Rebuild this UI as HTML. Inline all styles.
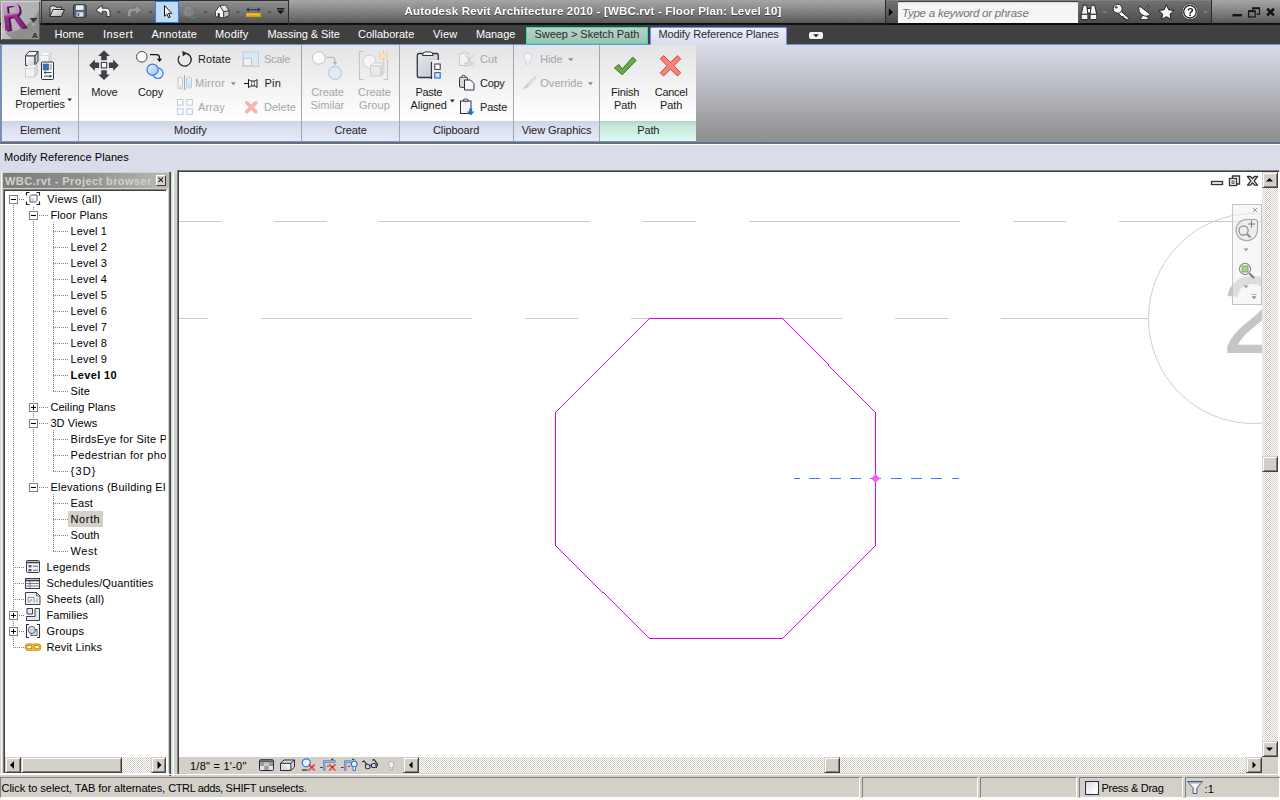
<!DOCTYPE html>
<html lang="en">
<head>
<meta charset="utf-8">
<title>Autodesk Revit Architecture 2010 - [WBC.rvt - Floor Plan: Level 10]</title>
<style>
html,body{margin:0;padding:0;}
body{width:1280px;height:800px;overflow:hidden;position:relative;background:#d4d0c8;font-family:"Liberation Sans",sans-serif;font-size:11px;color:#000;}
div,span,svg{position:absolute;box-sizing:border-box;}
svg{overflow:visible;}
.t{white-space:nowrap;line-height:14px;height:14px;}
.b{font-weight:bold;}
.t .i{position:static;white-space:pre;}
/* title / QAT */
#titlebar{left:0;top:0;width:1280px;height:25px;background:linear-gradient(rgba(0,0,0,0) 0,rgba(0,0,0,0) 23px,#0a0a0a 23px,#141414 25px),repeating-linear-gradient(135deg,rgba(255,255,255,.045) 0,rgba(255,255,255,.045) 1px,rgba(255,255,255,0) 1px,rgba(255,255,255,0) 3px),linear-gradient(#a4a4a4 0,#8e8e8e 30%,#707070 65%,#565656 92%);}
#menubar{left:0;top:25px;width:1280px;height:19px;background:#404040;}
#appbtn{left:1px;top:1px;width:39px;height:39px;background:linear-gradient(135deg,#a8a8a8 0,#9a9a9a 40%,#8c8c8c 70%,#929292 100%);border:1px solid #d6d6d6;border-right-color:#5a5a5a;border-bottom-color:#5a5a5a;}
#qat{left:41px;top:0;width:248px;height:25px;background:linear-gradient(#2c2c2c 0,#2c2c2c 1px,#9a9a9a 1px,#8a8a8a 2.5px,#7a7a7a 40%,#565656 22.5px,#0c0c0c 23px);border-right:1px solid #2c2c2c;border-left:1px solid #333;}
#qsel{left:155px;top:1px;width:24px;height:22px;background:#c3daf5;border:1px solid #2f7fe0;}
#info{left:885px;top:0;width:327px;height:25px;background:linear-gradient(#8a8a8a 0,#707070 1.5px,#5e5e5e 50%,#4c4c4c 22.5px,#0c0c0c 23px);border-left:1px solid #2a2a2a;border-right:1px solid #2a2a2a;}
#search{left:898px;top:1px;width:180px;height:22px;background:linear-gradient(#dcdcdc 0,#f4f4f4 2px,#f6f6f6 100%);border-top:1px solid #3a3a3a;}
.menu{color:#fff;top:27px;}
#tab1{left:526px;top:27px;width:122px;height:17px;background:linear-gradient(#b5d3c8 0,#9cc4b4 100%);border:1px solid #31e3a0;}
#tab2{left:650px;top:27px;width:137px;height:18px;background:linear-gradient(#eceffa 0,#dfe3f2 60%,#d9dce7 100%);border:1px solid #6f93e3;border-bottom:none;border-radius:2px 2px 0 0;z-index:2;}
#minbtn{left:809px;top:32px;width:14px;height:7px;background:#f2f2f2;border-radius:2px;}
#rlogo{left:2px;top:2px;width:37px;height:37px;overflow:hidden;}
#rlogo span{left:-5px;top:-13px;width:32px;height:50px;font-weight:bold;font-size:45px;line-height:50px;text-align:center;transform-origin:50% 60%;transform:perspective(40px) rotateX(22deg) rotateZ(-10deg) scaleX(.66);}
#rlogo .r1{color:transparent;background:linear-gradient(#dab8da 0,#c08cc0 47%,#9c2e92 53%,#761672 100%);-webkit-background-clip:text;background-clip:text;}
#rlogo .r2{color:#4e0e4c;left:-3.200px;top:-12.200px;}
/* ribbon */
#ribbon{left:0;top:44px;width:1280px;height:98px;background:linear-gradient(#d9dce7 0,#c6c9d3 25%,#a9aaae 65%,#8e8e8e 100%);border-top:1px solid #6f93e3;border-bottom:1px solid #6f93e3;border-left:2px solid #7d8fb8;}
#panels{left:2px;top:45px;width:694px;height:76px;background:linear-gradient(#e4e4e6 0,#efeff0 40%,#ffffff 100%);}
#plabels{left:2px;top:121px;width:694px;height:20px;background:linear-gradient(#ccd2e4 0,#d9deee 30%,#e8ebf7 100%);}
#plpath{left:600px;top:121px;width:96px;height:20px;background:linear-gradient(#b4d4c8 0,#c9e9dd 30%,#dffaf0 100%);}
.psep{top:45px;width:1px;height:96px;background:#a6a6a6;}
.pl{top:123px;color:#1e1e1e;}
.rt{color:#1a1a1a;}
.dis{color:#a6a6a6;}
#under1{left:0;top:142px;width:1280px;height:2px;background:#6e6e6e;}
#under2{left:0;top:144px;width:1280px;height:1px;background:#fff;}
#optbar{left:0;top:145px;width:1280px;height:27px;background:#dadde8;}
/* browser */
#pbtitle{left:3px;top:173px;width:166px;height:15px;background:linear-gradient(90deg,#7d7d7d 0,#8f8f8f 50%,#b9b9b9 100%);}
#pbclose{left:156px;top:175px;width:10px;height:11px;background:#d4d0c8;border:1px solid #fff;border-right-color:#404040;border-bottom-color:#404040;}
#tree{left:3px;top:189px;width:165px;height:584px;background:#fff;border:1px solid #404040;border-top-color:#808080;border-left-color:#808080;border-right:2px solid #fff;border-bottom:none;box-shadow:inset 1px 1px 0 #404040;}
#treeclip{left:5px;top:191px;width:161px;height:566px;overflow:hidden;}
.tr{color:#000;}
.vd{width:1px;background:repeating-linear-gradient(#808080 0,#808080 1px,transparent 1px,transparent 2px);}
.hd{height:1px;background:repeating-linear-gradient(90deg,#808080 0,#808080 1px,transparent 1px,transparent 2px);}
.xb{width:9px;height:9px;border:1px solid #808080;background:#fff;}
.xb i{position:absolute;left:1px;top:3px;width:5px;height:1px;background:#000;}
.xb b{position:absolute;left:3px;top:1px;width:1px;height:5px;background:#000;}
/* classic scrollbars */
.sbtn{background:#d4d0c8;border:1px solid #d4d0c8;border-right-color:#404040;border-bottom-color:#404040;box-shadow:inset 1px 1px 0 #fff,inset -1px -1px 0 #808080;}
.strack{background:#eae8e3;background-image:repeating-conic-gradient(#fff 0 25%,#d4d0c8 0 50%);background-size:2px 2px;}
/* canvas */
#canvas{left:179px;top:172px;width:1083px;height:585px;background:#fff;overflow:hidden;}
#cborderT{left:177px;top:170px;width:1102px;height:2px;background:#404040;border-top:1px solid #808080;}
#cborderL{left:177px;top:170px;width:2px;height:604px;background:#404040;border-left:1px solid #808080;}
#vcbar{left:179px;top:757px;width:224px;height:16px;background:#d4d0c8;}
/* status */
#status{left:0;top:776px;width:1280px;height:24px;background:#d4d0c8;}
.spane{top:777px;height:21px;border:1px solid #808080;border-right-color:#fff;border-bottom-color:#fff;}
</style>
</head>
<body>
<div id="titlebar"></div>
<div id="menubar"></div>
<div id="qat"></div>
<div id="qsel"></div>
<div id="appbtn"></div>
<!-- application button logo -->
<svg style="left:0;top:0" width="41" height="41" viewBox="0 0 41 41">
  <defs>
    <linearGradient id="rg" x1="0" y1="0" x2="0" y2="1"><stop offset="0" stop-color="#d6b4d6"/><stop offset=".42" stop-color="#bb88bb"/><stop offset=".5" stop-color="#9c2e92"/><stop offset="1" stop-color="#7a1674"/></linearGradient>
    <linearGradient id="rg2" x1="0" y1="0" x2="0" y2="1"><stop offset="0" stop-color="#9a5a98"/><stop offset=".5" stop-color="#601660"/><stop offset="1" stop-color="#420a40"/></linearGradient>
    <clipPath id="abc"><rect x="2" y="2" width="37" height="37"/></clipPath>
  </defs>
  <g clip-path="url(#abc)">
    <circle cx="2" cy="-8" r="41" fill="#c9c9c9" fill-opacity=".55"/>
    <path d="M2 39V26Q4 33 12 39z" fill="#d8d8d8" fill-opacity=".6"/>
  </g>
  <path d="M29.700 18h7.700l-3.850 4.600z" fill="#2e3238"/>
  <path d="M30.500 23.300h6.100l-3.050 3.200z" fill="#fff" fill-opacity=".25"/>
  <text x="32" y="38.200" font-family="Liberation Sans, sans-serif" font-weight="bold" font-size="8" fill="#2a2a2a">A</text>
</svg>
<div id="rlogo"><span class="r2">R</span><span class="r1">R</span></div>
<!-- quick access toolbar icons -->
<svg style="left:0;top:0" width="290" height="24" viewBox="0 0 290 24">
  <defs><linearGradient id="fold" x1="0" y1="0" x2="1" y2="1"><stop offset="0" stop-color="#f4f4f4"/><stop offset="1" stop-color="#a9a9ad"/></linearGradient></defs>
  <!-- open -->
  <path d="M50 16.500V7.200l1-1.400h4l1 1.400h5.500v2.300" fill="#d6d6d8" stroke="#2b2b2b" stroke-width="1"/>
  <path d="M50 16.500l3-7h11.500l-3.200 7z" fill="url(#fold)" stroke="#2b2b2b" stroke-width="1" stroke-linejoin="round"/>
  <!-- save -->
  <rect x="73.5" y="4.8" width="12.6" height="12.4" rx="1.4" fill="#5b667c" stroke="#262c3a" stroke-width="1"/>
  <rect x="76" y="5.3" width="7.6" height="4.6" fill="#eef0f4"/>
  <rect x="76.5" y="12.2" width="6.8" height="4.5" fill="#dfe3ea"/><rect x="77.6" y="13.2" width="1.6" height="2.6" fill="#3a465e"/>
  <!-- undo -->
  <path d="M95.800 10.200l6.400-5v3h3.300q4.500 0 4.500 4.600v3.800h-3.200v-3.200q0-2.200-2.200-2.200h-2.400v3z" fill="#f4f4f4" stroke="#2a2a2a" stroke-width=".900" stroke-linejoin="round"/>
  <path d="M116.3 11.3h5l-2.5 2.6z" fill="#505050"/>
  <!-- redo (dim) -->
  <path d="M141.800 10.200l-6.400-5v3h-3.300q-4.500 0-4.500 4.600v3.800h3.200v-3.200q0-2.200 2.200-2.200h2.400v3z" fill="#9c9c9c" stroke="#727272" stroke-width=".900" stroke-linejoin="round"/>
  <path d="M148.2 11.3h5l-2.5 2.6z" fill="#505050"/>
  <!-- pointer -->
  <path d="M164.5 5.6v10.6l2.4-2.3 1.7 3.8 1.6-.7-1.7-3.7h3.2z" fill="#fff" stroke="#111" stroke-width="1" stroke-linejoin="round"/>
  <!-- sync 3d (dim) -->
  <path d="M183 8l5.5-3 5.5 3v6.4l-5.5 3-5.5-3z" fill="#8a8a8a" stroke="#6e6e6e" stroke-width=".8"/>
  <path d="M183 8l5.5 3 5.5-3M188.500 11v6.400" fill="none" stroke="#777" stroke-width=".8"/>
  <path d="M190.500 13.300a3.300 3.300 0 0 1 5.800-1.200M196.800 15.600a3.300 3.300 0 0 1-5.800 1.200" fill="none" stroke="#4a9a52" stroke-width="1.200"/>
  <path d="M203.200 11.300h5l-2.500 2.600z" fill="#505050"/>
  <!-- house -->
  <path d="M219.800 5.600l5.800-.6 3.400 5.800-5.400 1z" fill="#e4e4e4" stroke="#2b2b2b" stroke-width=".800" stroke-linejoin="round"/>
  <path d="M223.600 11.800l5.400-1v4.800l-5.400 2.300z" fill="#c4c4c6" stroke="#2b2b2b" stroke-width=".800" stroke-linejoin="round"/>
  <path d="M215.500 11.500l4.300-5.900 3.800 6.200v6.100l-8.100-1.300z" fill="#f8f8f8" stroke="#2b2b2b" stroke-width=".800" stroke-linejoin="round"/>
  <path d="M217.700 17v-4l2 .3v4z" fill="#222"/>
<path d="M235.400 11.300h5l-2.500 2.600z" fill="#505050"/>
  <!-- measure -->
  <path d="M246 9.600l3-2.400v1.800h8.800V7.200l3 2.400-3 2.400v-1.800H249v1.800z" fill="#2e3a4e"/>
  <rect x="246" y="13.200" width="15" height="3.600" fill="#f2a900"/>
  <path d="M248 13.200v1.600M250 13.200v1.600M252 13.200v1.600M254 13.200v1.600M256 13.200v1.600M258 13.200v1.600" stroke="#fbe08a" stroke-width=".8"/>
  <path d="M267.200 11.300h5l-2.500 2.600z" fill="#505050"/>
  <!-- customize -->
  <rect x="277" y="8.200" width="7.400" height="1.300" fill="#0c0c0c"/>
  <path d="M277 10.400h7.400l-3.700 3.600z" fill="#0c0c0c"/>
</svg>
<!-- title -->
<span class="t b" style="left:404.5px;top:4px;font-size:11.5px;color:#fff;text-shadow:0 1px 1px rgba(0,0,0,.55);letter-spacing:0.177px">Autodesk Revit Architecture 2010 - [WBC.rvt - Floor Plan: Level 10]</span>
<!-- info center -->
<div id="info"></div>
<div id="search"></div>
<span class="t" style="left:902px;top:6px;font-size:11.5px;font-style:italic;color:#747474;letter-spacing:-0.231px">Type a keyword or phrase</span>
<svg style="left:880px;top:0" width="400" height="24" viewBox="880 0 400 24">
  <path d="M888.800 8.300l4.200 3.900-4.200 3.900z" fill="#050505"/>
  <!-- binoculars -->
  <g stroke="#1a1a1a" stroke-width=".900" stroke-linejoin="round" fill="#f6f6f6">
    <rect x="1087" y="8.500" width="4" height="4.500"/>
    <path d="M1083.300 5.300h3.400l1.200 9h-6.600z"/>
    <path d="M1091.300 5.300h3.400l2 9h-6.600z"/>
    <rect x="1081.200" y="14.300" width="6.700" height="5.300" rx=".800"/>
    <rect x="1090.100" y="14.300" width="6.700" height="5.300" rx=".800"/>
  </g>
  <path d="M1102.400 11.200h4.800l-2.400 2.700z" fill="#7c7c7c"/>
  <!-- key -->
  <path d="M1120.500 10.800l8.300 7.400-.6 1.400-2.600.2-.4-1.600-1.700.1-.3-1.700-1.700-.1-3.600-3.400z" fill="#f4f4f4" stroke="#1a1a1a" stroke-width=".900" stroke-linejoin="round"/>
  <circle cx="1117.700" cy="8.700" r="4.500" fill="#f4f4f4" stroke="#1a1a1a" stroke-width=".900"/>
  <circle cx="1116.200" cy="7.200" r="1.300" fill="#4a4a4a"/>
  <!-- satellite dish -->
  <path d="M1140 19.600l3.200-5h2.600l3.200 5z" fill="#f4f4f4" stroke="#1a1a1a" stroke-width=".800" stroke-linejoin="round"/>
  <path d="M1139.400 5.800l11 8.600q-3.800 3.400-8.400.400t-2.600-9z" fill="#f6f6f6" stroke="#1a1a1a" stroke-width=".900" stroke-linejoin="round"/>
  <path d="M1144.600 10.300l4.600-4.800" stroke="#1a1a1a" stroke-width="2"/>
  <path d="M1144.600 10.300l4.600-4.800" stroke="#eaeaea" stroke-width=".800"/>
  <!-- star -->
  <path d="M1166.400 4.800l2.300 5 5.400.6-4 3.700 1.100 5.300-4.800-2.700-4.800 2.700 1.100-5.300-4-3.700 5.400-.6z" fill="#f6f6f6" stroke="#1a1a1a" stroke-width="1" stroke-linejoin="round"/>
  <!-- help -->
  <circle cx="1190" cy="11.700" r="8" fill="#f6f6f6" stroke="#2a2a2a" stroke-width=".800"/>
  <circle cx="1190" cy="11.700" r="6.300" fill="#fff" stroke="#1a1a1a" stroke-width="1.300"/>
  <text x="1186.900" y="15.700" font-family="Liberation Sans, sans-serif" font-weight="bold" font-size="11" fill="#1a1a1a">?</text>
  <path d="M1203.200 11.200h4.800l-2.400 2.700z" fill="#7c7c7c"/>
  <!-- window buttons -->
  <rect x="1232.500" y="14" width="9.500" height="2.400" fill="#141414"/>
  <path d="M1252.700 10v-2h6.800v6.200h-3" fill="none" stroke="#141414" stroke-width="1.200"/>
  <path d="M1252.700 8.300h6.800" stroke="#141414" stroke-width="1.800"/>
  <rect x="1248.600" y="11" width="6.600" height="6" fill="none" stroke="#141414" stroke-width="1.200"/>
  <path d="M1248.600 11.300h6.600" stroke="#141414" stroke-width="1.800"/>
  <path d="M1267.200 8.800l6.800 6.600M1274 8.800l-6.800 6.600" stroke="#141414" stroke-width="2.700"/>
</svg>
<!-- menu -->
<span class="t menu" style="left:54.500px;letter-spacing:-0.015px">Home</span>
<span class="t menu" style="left:103px;letter-spacing:0.457px">Insert</span>
<span class="t menu" style="left:151.500px;letter-spacing:0.179px">Annotate</span>
<span class="t menu" style="left:215px;letter-spacing:0.179px">Modify</span>
<span class="t menu" style="left:267.500px;letter-spacing:-0.083px">Massing &amp; Site</span>
<span class="t menu" style="left:358px;letter-spacing:0.003px">Collaborate</span>
<span class="t menu" style="left:433px;letter-spacing:0.215px">View</span>
<span class="t menu" style="left:476px;letter-spacing:-0.093px">Manage</span>
<div id="tab1"></div>
<div id="tab2"></div>
<span class="t" style="left:534.500px;top:27px;color:#2a2a2a;letter-spacing:-0.038px">Sweep &gt; Sketch Path</span>
<span class="t" style="left:658.500px;top:27px;color:#2a2a2a;z-index:3;letter-spacing:-0.118px">Modify Reference Planes</span>
<div id="minbtn"></div>
<svg style="left:809px;top:32px" width="14" height="7" viewBox="0 0 14 7"><path d="M4.200 2.200h5.600l-2.800 3z" fill="#222"/></svg>
<div id="ribbon"></div>
<div id="panels"></div>
<div id="plabels"></div>
<div id="plpath"></div>
<div class="psep" style="left:78px"></div>
<div class="psep" style="left:301px"></div>
<div class="psep" style="left:399px"></div>
<div class="psep" style="left:513px"></div>
<div class="psep" style="left:599px"></div>
<div id="under1"></div>
<div id="under2"></div>
<div id="optbar"></div>
<svg style="left:0;top:44px" width="700" height="98" viewBox="0 44 700 98">
  <defs>
    <linearGradient id="cube" x1="0" y1="0" x2="1" y2="1"><stop offset="0" stop-color="#fdfdfd"/><stop offset="1" stop-color="#cfd2d8"/></linearGradient>
    <linearGradient id="bl" x1="0" y1="0" x2="1" y2="1"><stop offset="0" stop-color="#e3eefa"/><stop offset="1" stop-color="#9cc3ea"/></linearGradient>
    <linearGradient id="clipg" x1="0" y1="0" x2="1" y2="1"><stop offset="0" stop-color="#e6e7ec"/><stop offset="1" stop-color="#c3c5cf"/></linearGradient>
  </defs>
  <!-- Element Properties -->
  <g stroke-linejoin="round">
    <path d="M25.500 56l3.500-4.500h9l-3 4.500z" fill="#f7f7f8" stroke="#3a4150" stroke-width="1"/>
    <path d="M25.500 56h9.500v9.500h-9.500z" fill="url(#cube)" stroke="#3a4150" stroke-width="1"/>
    <path d="M35 56l3-4.500v9.500l-3 4.500z" fill="#c3c7cf" stroke="#3a4150" stroke-width="1"/>
    <path d="M40 55.500l2.500-3.500h8l-2 3.500z" fill="#fafafa" stroke="#d4d6da" stroke-width=".8"/>
    <path d="M40 55.500h9v9h-9z" fill="#f6f6f7" stroke="#d0d2d6" stroke-width=".8"/>
    <path d="M49 55.500l2-3.500v9l-2 3.500z" fill="#e2e4e8" stroke="#d0d2d6" stroke-width=".8"/>
    <path d="M25.500 68h9.500v9h-9.500z" fill="#f3f3f5" stroke="#c6c8cd" stroke-width=".9"/>
    <path d="M25.500 68l3-3h9l-2.500 3z" fill="#fafafa" stroke="#d0d2d6" stroke-width=".8"/>
    <path d="M35 68l2.500-3v9l-2.500 3z" fill="#dcdee3" stroke="#c6c8cd" stroke-width=".8"/>
    <rect x="41.500" y="62" width="12" height="17.500" rx="1" fill="#fbfbfc" stroke="#2c3443" stroke-width="1"/>
    <rect x="43.200" y="64" width="5.400" height="6" fill="#3f6fb3" stroke="#27497e" stroke-width=".6"/>
    <rect x="49.600" y="64" width="2.200" height="6" fill="#b9bdc6"/>
    <path d="M44 72.500h7.500M44 76.200h7.500" stroke="#2c3443" stroke-width=".9"/>
    <path d="M45.800 71.200l-1.800 1.300 1.800 1.300M49.500 74.900l2 1.300-2 1.300" fill="none" stroke="#2c3443" stroke-width=".8"/>
  </g>
  <path d="M67.400 98.400h4.600l-2.300 2.800z" fill="#222"/>
  <!-- Move -->
  <g fill="#3c4049">
    <path d="M104 50.300l5.800 5.700h-3v4.200h-5.600v-4.200h-3z"/>
    <path d="M104 80.100l5.800-5.700h-3v-4.200h-5.600v4.200h-3z"/>
    <path d="M89.200 65.200l5.700-5.800v3h4.200v5.600h-4.200v3z"/>
    <path d="M118.800 65.200l-5.700-5.800v3h-4.200v5.600h4.200v3z"/>
    <rect x="101.300" y="62.500" width="5.400" height="5.400" fill="#fff" stroke="#3c4049" stroke-width="1.100"/>
  </g>
  <!-- Copy -->
  <circle cx="141.800" cy="56.800" r="5.300" fill="#fcfcfc" stroke="#4a4a4a" stroke-width="1"/>
  <path d="M150 54.600h6.500q3 0 3 3v2" fill="none" stroke="#111" stroke-width="1.300"/>
  <path d="M156.900 58.700h5.200l-2.600 3.200z" fill="#111"/>
  <circle cx="157.900" cy="73.300" r="5.200" fill="#dcebf8" stroke="#2f7fd4" stroke-width="1.200"/>
  <circle cx="152.600" cy="69.700" r="5.600" fill="url(#bl)" stroke="#2f7fd4" stroke-width="1.200"/>
  <!-- Rotate -->
  <path d="M185.700 53.200a6.500 6.500 0 1 1-6.300 2.600" fill="none" stroke="#2b2b2b" stroke-width="1.400"/>
  <path d="M182.300 50.800l4.700 2.400-4.200 3.200z" fill="#2b2b2b"/>
  <!-- Scale (dim) -->
  <rect x="243" y="51.800" width="15.500" height="14.500" fill="#dbe7f1" stroke="#b9cfe2" stroke-width="1"/>
  <rect x="243.500" y="58.300" width="8" height="7.500" fill="#eef2f5" stroke="#c4c4c4" stroke-width="1"/>
  <!-- Mirror (dim) -->
  <path d="M184.500 75v15" stroke="#a9a9a9" stroke-width="1"/>
  <path d="M182.500 90v-12q-2-2-4.500 0v10.500h2.500v-3" fill="#f4f4f4" stroke="#c2c2c2" stroke-width="1"/>
  <path d="M186.500 89.500v-11.500q2.500-2.500 5 0v10h-2.500v-3" fill="#dde9f5" stroke="#b5cde6" stroke-width="1"/>
  <path d="M230.800 82.300h5l-2.500 3z" fill="#8a8a8a"/>
  <!-- Pin -->
  <path d="M244 83.500h4.500" stroke="#1e1e1e" stroke-width="1.100"/>
  <path d="M248.500 79.300q1.600 1.700 3.200 1.700h2.600q1.500 0 2.700-1.500v8q-1.200-1.500-2.700-1.500h-2.600q-1.600 0-3.200 1.700z" fill="#fff" stroke="#1e1e1e" stroke-width="1" stroke-linejoin="round"/>
  <path d="M251.700 81v5M254.300 81v5" stroke="#1e1e1e" stroke-width=".700"/>
  <!-- Array (dim) -->
  <g fill="#fafbfc" stroke-width="1">
    <rect x="177.500" y="99.500" width="5.600" height="5.600" stroke="#c8c8c8"/>
    <rect x="186.800" y="99.500" width="5.600" height="5.600" stroke="#b4cfe8"/>
    <rect x="177.500" y="108.800" width="5.600" height="5.600" stroke="#b4cfe8"/>
    <rect x="186.800" y="108.800" width="5.600" height="5.600" stroke="#b4cfe8"/>
  </g>
  <!-- Delete (dim) -->
  <path d="M246.800 102.800l9 9M255.800 102.800l-9 9" stroke="#f3b4b0" stroke-width="3.600" stroke-linecap="round"/>
  <!-- Create Similar (dim) -->
  <circle cx="318.800" cy="57.900" r="6.300" fill="#fafafa" stroke="#c2c2c2" stroke-width="1"/>
  <path d="M326.500 57.200h5.500q3 0 3 3v3" fill="none" stroke="#b0b0b0" stroke-width="1.100"/>
  <path d="M332.600 62.200h4.800l-2.400 3z" fill="#b0b0b0"/>
  <circle cx="335" cy="73" r="6.600" fill="#dfeaf4" stroke="#b5cfe8" stroke-width="1.100"/>
  <!-- Create Group (dim) -->
  <path d="M363.500 51.500h-4v28h4M383.500 79.500h4v-20" fill="none" stroke="#c6c6c6" stroke-width="1.100"/>
  <circle cx="369.500" cy="61.500" r="6.500" fill="#f6f6f6" stroke="#cfcfcf" stroke-width="1"/>
  <path d="M370.500 66l3-3h10.500l-3 3z" fill="#f2f2f3" stroke="#c8c8c8" stroke-width=".8"/>
  <rect x="370.500" y="66" width="10.500" height="10" fill="#e9e9eb" stroke="#c8c8c8" stroke-width=".8"/>
  <path d="M381 66l3-3v10l-3 3z" fill="#dcdcdf" stroke="#c8c8c8" stroke-width=".8"/>
  <g stroke="#f6c27a" stroke-width="1"><path d="M383.500 50.500v11M378 56h11M379.600 52.100l7.800 7.800M387.400 52.100l-7.800 7.800"/></g>
  <circle cx="383.500" cy="56" r="2" fill="#fbe9c8"/>
  <!-- Paste Aligned -->
  <rect x="417.300" y="53.500" width="21" height="24" rx="2" fill="url(#clipg)" stroke="#2f3540" stroke-width="1.300"/>
  <path d="M422.500 55.500q0-3.600 3-3.600h4.600q3 0 3 3.600z" fill="#fcfcfc" stroke="#2f3540" stroke-width="1"/>
  <path d="M431.500 62v17" stroke="#2f3540" stroke-width="1.300"/>
  <path d="M432.200 60h8v19h-8z" fill="#f1f1f3"/>
  <rect x="434.800" y="64" width="5.400" height="5.400" fill="#fff" stroke="#2f3540" stroke-width="1"/>
  <rect x="434.800" y="72.600" width="5.400" height="5.400" fill="#cfe2f4" stroke="#1f6fc6" stroke-width="1.100"/>
  <path d="M450 99.600h4.600l-2.300 2.800z" fill="#222"/>
  <!-- Cut (dim) -->
  <rect x="459.500" y="53.500" width="9.500" height="12" fill="#f2f2f2" stroke="#cbcbcb" stroke-width="1"/>
  <path d="M462 53.500q0-2 2-2h1q2 0 2 2z" fill="#f2f2f2" stroke="#cbcbcb" stroke-width=".8"/>
  <path d="M465 54.500l7 9M474 54.500l-8 9" stroke="#c4c4c4" stroke-width="1"/>
  <circle cx="466" cy="64.500" r="1.600" fill="none" stroke="#c4c4c4" stroke-width=".9"/><circle cx="472.500" cy="64.500" r="1.600" fill="none" stroke="#c4c4c4" stroke-width=".9"/>
  <!-- Copy -->
  <rect x="459.500" y="77.300" width="8" height="10" rx="1" fill="#d6d8de" stroke="#2f3540" stroke-width="1"/>
  <path d="M461.500 77.300q0-2 2-2t2 2" fill="#e8e8ea" stroke="#2f3540" stroke-width=".9"/>
  <path d="M464.500 80h6l3.500 3.500v6.500h-9.500z" fill="#f6f6f8" stroke="#2f3540" stroke-width="1" stroke-linejoin="round"/>
  <!-- Paste -->
  <rect x="460.500" y="101" width="10.500" height="12.500" fill="#f4f4f6" stroke="#2f3540" stroke-width="1"/>
  <path d="M463 101q0-2 2-2h1.500q2 0 2 2z" fill="#f4f4f6" stroke="#2f3540" stroke-width=".9"/>
  <path d="M469.200 108.500h3v3h2.300l-3.800 4-3.800-4h2.300z" fill="#1f6fd0"/>
  <!-- Hide (dim) -->
  <circle cx="527.800" cy="57.200" r="4" fill="#f0f5fa" stroke="#c9dbec" stroke-width="1"/>
  <path d="M526.300 60.800v3.600h3v-3.600" fill="#f4f4f4" stroke="#cfd6de" stroke-width=".9"/>
  <path d="M568.300 58.300h5l-2.500 3z" fill="#8a8a8a"/>
  <!-- Override (dim) -->
  <path d="M534.800 76.200l1.400 1.400-7 8-2-1.800z" fill="#ecdccb" stroke="#dcc7b2" stroke-width=".6"/>
  <path d="M527.400 83.800l2 1.800q-2 3.400-8.800 3.600 3.800-1.200 4.600-3.800z" fill="#d9cbc0"/>
  <path d="M588 82.300h5l-2.500 3z" fill="#8a8a8a"/>
  <!-- Finish -->
  <path d="M614.300 68l4.600-3.600 3.200 4.600 10.600-11.800 3.400 3.200-13.800 14.400z" fill="#6aa84a" stroke="#3d7a27" stroke-width="1" stroke-linejoin="round"/>
  <!-- Cancel -->
  <path d="M663.500 55.600l7 6.800 7-6.800 3.200 3.200-6.800 7 6.800 7-3.200 3.200-7-6.800-7 6.800-3.200-3.200 6.800-7-6.800-7z" fill="#f5837a" stroke="#d2483e" stroke-width="1" stroke-linejoin="round"/>
</svg>
<!-- big button labels -->
<span class="t rt" style="left:20px;top:84px;letter-spacing:-0.010px">Element</span>
<span class="t rt" style="left:15.300px;top:97px;letter-spacing:-0.038px">Properties</span>
<span class="t rt" style="left:91.300px;top:85px;letter-spacing:-0.202px">Move</span>
<span class="t rt" style="left:138px;top:85px;letter-spacing:-0.129px">Copy</span>
<span class="t rt" style="left:198px;top:52px;letter-spacing:0.076px">Rotate</span>
<span class="t dis" style="left:264px;top:52px;letter-spacing:-0.308px">Scale</span>
<span class="t dis" style="left:195px;top:76px;letter-spacing:0.216px">Mirror</span>
<span class="t rt" style="left:264.500px;top:76px;letter-spacing:0.197px">Pin</span>
<span class="t dis" style="left:198px;top:100px;letter-spacing:0.130px">Array</span>
<span class="t dis" style="left:264px;top:100px;letter-spacing:0.001px">Delete</span>
<span class="t dis" style="left:311.200px;top:85px;letter-spacing:-0.046px">Create</span>
<span class="t dis" style="left:310.500px;top:98px;letter-spacing:0.029px">Similar</span>
<span class="t dis" style="left:358px;top:85px;letter-spacing:-0.046px">Create</span>
<span class="t dis" style="left:359px;top:98px;letter-spacing:0.055px">Group</span>
<span class="t rt" style="left:415.500px;top:85px;letter-spacing:-0.335px">Paste</span>
<span class="t rt" style="left:410.500px;top:98px;letter-spacing:-0.067px">Aligned</span>
<span class="t dis" style="left:480px;top:52px;letter-spacing:0.088px">Cut</span>
<span class="t rt" style="left:480px;top:76px;letter-spacing:-0.296px">Copy</span>
<span class="t rt" style="left:480px;top:100px;letter-spacing:-0.210px">Paste</span>
<span class="t dis" style="left:540.300px;top:52px;letter-spacing:-0.108px">Hide</span>
<span class="t dis" style="left:540.300px;top:76px;letter-spacing:0.016px">Override</span>
<span class="t rt" style="left:611px;top:85px;letter-spacing:-0.209px">Finish</span>
<span class="t rt" style="left:614px;top:98px;letter-spacing:-0.114px">Path</span>
<span class="t rt" style="left:654.800px;top:85px;letter-spacing:-0.290px">Cancel</span>
<span class="t rt" style="left:660px;top:98px;letter-spacing:-0.114px">Path</span>
<!-- panel labels -->
<span class="t pl" style="left:20px;letter-spacing:-0.010px">Element</span>
<span class="t pl" style="left:174px;letter-spacing:0.079px">Modify</span>
<span class="t pl" style="left:334.500px;letter-spacing:-0.146px">Create</span>
<span class="t pl" style="left:433px;letter-spacing:-0.099px">Clipboard</span>
<span class="t pl" style="left:521.700px;letter-spacing:-0.077px">View Graphics</span>
<span class="t pl" style="left:637.200px;letter-spacing:-0.114px">Path</span>
<!-- options bar -->
<span class="t" style="left:4px;top:150px;letter-spacing:0.086px">Modify Reference Planes</span>
<div id="pbtitle"></div>
<span class="t b" style="left:5px;top:174px;color:#d4d0c8;letter-spacing:0.416px">WBC.rvt - Project browser</span>
<div id="pbclose"></div>
<svg style="left:156px;top:175px" width="10" height="10" viewBox="0 0 10 10"><path d="M2.500 2.500l4.500 4.500M7 2.500l-4.500 4.500" stroke="#000" stroke-width="1.050"/></svg>
<div id="tree"></div>
<div id="treeclip">
<div style="left:63px;top:320px;width:35px;height:16px;background:#d4d0c8"></div>
<div class="vd" style="left:8px;top:14px;height:443px"></div>
<div class="vd" style="left:28px;top:16px;height:276px"></div>
<div class="vd" style="left:48px;top:31px;height:170px"></div>
<div class="vd" style="left:48px;top:239px;height:42px"></div>
<div class="vd" style="left:48px;top:303px;height:58px"></div>
<div class="hd" style="left:14px;top:8px;width:6px"></div>
<div class="hd" style="left:34px;top:24px;width:10px"></div>
<div class="hd" style="left:48px;top:40px;width:16px"></div>
<div class="hd" style="left:48px;top:56px;width:16px"></div>
<div class="hd" style="left:48px;top:72px;width:16px"></div>
<div class="hd" style="left:48px;top:88px;width:16px"></div>
<div class="hd" style="left:48px;top:104px;width:16px"></div>
<div class="hd" style="left:48px;top:120px;width:16px"></div>
<div class="hd" style="left:48px;top:136px;width:16px"></div>
<div class="hd" style="left:48px;top:152px;width:16px"></div>
<div class="hd" style="left:48px;top:168px;width:16px"></div>
<div class="hd" style="left:48px;top:184px;width:16px"></div>
<div class="hd" style="left:48px;top:200px;width:16px"></div>
<div class="hd" style="left:34px;top:216px;width:10px"></div>
<div class="hd" style="left:34px;top:232px;width:10px"></div>
<div class="hd" style="left:48px;top:248px;width:16px"></div>
<div class="hd" style="left:48px;top:264px;width:16px"></div>
<div class="hd" style="left:48px;top:280px;width:16px"></div>
<div class="hd" style="left:34px;top:296px;width:10px"></div>
<div class="hd" style="left:48px;top:312px;width:16px"></div>
<div class="hd" style="left:48px;top:328px;width:16px"></div>
<div class="hd" style="left:48px;top:344px;width:16px"></div>
<div class="hd" style="left:48px;top:360px;width:16px"></div>
<div class="hd" style="left:10px;top:376px;width:10px"></div>
<div class="hd" style="left:10px;top:392px;width:10px"></div>
<div class="hd" style="left:10px;top:408px;width:10px"></div>
<div class="hd" style="left:14px;top:424px;width:6px"></div>
<div class="hd" style="left:14px;top:440px;width:6px"></div>
<div class="hd" style="left:10px;top:456px;width:10px"></div>
<div class="xb" style="left:4px;top:4px"><i></i></div>
<div class="xb" style="left:24px;top:20px"><i></i></div>
<div class="xb" style="left:24px;top:212px"><i></i><b></b></div>
<div class="xb" style="left:24px;top:228px"><i></i></div>
<div class="xb" style="left:24px;top:292px"><i></i></div>
<div class="xb" style="left:4px;top:420px"><i></i><b></b></div>
<div class="xb" style="left:4px;top:436px"><i></i><b></b></div>
<span class="t tr" style="left:42.2px;top:1px;letter-spacing:0.357px">Views (all)</span>
<span class="t tr" style="left:45.4px;top:17px;letter-spacing:0.146px">Floor Plans</span>
<span class="t tr" style="left:65.6px;top:33px;letter-spacing:0.136px">Level 1</span>
<span class="t tr" style="left:65.6px;top:49px;letter-spacing:0.136px">Level 2</span>
<span class="t tr" style="left:65.6px;top:65px;letter-spacing:0.136px">Level 3</span>
<span class="t tr" style="left:65.6px;top:81px;letter-spacing:0.136px">Level 4</span>
<span class="t tr" style="left:65.6px;top:97px;letter-spacing:0.136px">Level 5</span>
<span class="t tr" style="left:65.6px;top:113px;letter-spacing:0.136px">Level 6</span>
<span class="t tr" style="left:65.6px;top:129px;letter-spacing:0.136px">Level 7</span>
<span class="t tr" style="left:65.6px;top:145px;letter-spacing:0.136px">Level 8</span>
<span class="t tr" style="left:65.6px;top:161px;letter-spacing:0.136px">Level 9</span>
<span class="t tr b" style="left:65.6px;top:177px;letter-spacing:0.383px">Level 10</span>
<span class="t tr" style="left:65.6px;top:193px;letter-spacing:0.110px">Site</span>
<span class="t tr" style="left:45.4px;top:209px;letter-spacing:0.075px">Ceiling Plans</span>
<span class="t tr" style="left:45.4px;top:225px;letter-spacing:0.076px">3D Views</span>
<span class="t tr" style="left:65.6px;top:241px;letter-spacing:0.23px">BirdsEye for Site P</span>
<span class="t tr" style="left:65.6px;top:257px;letter-spacing:0.34px">Pedestrian for pho</span>
<span class="t tr" style="left:65.6px;top:273px;letter-spacing:1.126px">{3D}</span>
<span class="t tr" style="left:45.4px;top:289px;letter-spacing:0.25px">Elevations (Building Ele</span>
<span class="t tr" style="left:65.6px;top:305px;letter-spacing:0.095px">East</span>
<span class="t tr" style="left:65.6px;top:321px;letter-spacing:0.548px">North</span>
<span class="t tr" style="left:65.6px;top:337px;letter-spacing:0.038px">South</span>
<span class="t tr" style="left:65.6px;top:353px;letter-spacing:0.547px">West</span>
<span class="t tr" style="left:41.4px;top:369px;letter-spacing:0.280px">Legends</span>
<span class="t tr" style="left:41.4px;top:385px;letter-spacing:0.155px">Schedules/Quantities</span>
<span class="t tr" style="left:41.4px;top:401px;letter-spacing:0.205px">Sheets (all)</span>
<span class="t tr" style="left:41.4px;top:417px;letter-spacing:0.078px">Families</span>
<span class="t tr" style="left:41.4px;top:433px;letter-spacing:0.284px">Groups</span>
<span class="t tr" style="left:41.4px;top:449px;letter-spacing:0.170px">Revit Links</span>
</div>
<!-- tree icons -->
<svg style="left:0;top:189px" width="170" height="470" viewBox="0 189 170 470">
  <!-- views (all) -->
  <g fill="none" stroke="#1c2438" stroke-width="1.200">
    <path d="M26.500 195.500v-3h3M36.500 192.500h3v3M39.500 201.500v3h-3M29.500 204.500h-3v-3"/>
  </g>
  <path d="M30 196.500l1.500-1.500h5.500v5.500l-1.500 1.500h-5.500z" fill="#fff" stroke="#3a4256" stroke-width=".900"/><rect x="31.500" y="198" width="3" height="3" fill="#d4d8e2"/>
  
  <!-- legends -->
  <rect x="26.500" y="560.500" width="13" height="12" rx="1" fill="#f4f4f6" stroke="#3a3f4a" stroke-width="1"/>
  <path d="M26.500 562.500h13" stroke="#3a3f4a" stroke-width="1.600"/>
  <rect x="28.500" y="565" width="3" height="2.400" fill="#5a6070"/><rect x="28.500" y="569" width="3" height="2.400" fill="#5a6070"/>
  <path d="M33 566.200h5M33 570.200h5" stroke="#5a6070" stroke-width="1"/>
  <!-- schedules -->
  <rect x="25.500" y="578.500" width="14" height="10" fill="#f6f6f8" stroke="#3a3f4a" stroke-width="1"/>
  <path d="M25.500 580.500h14" stroke="#3a3f4a" stroke-width="1.600"/>
  <path d="M25.500 583.500h14M25.500 586h14M30 581v7.500" stroke="#6a7080" stroke-width=".900"/>
  <!-- sheets -->
  <path d="M25.500 592.500h11l3.500 3.500v8.500h-14.500z" fill="#f4f4f6" stroke="#3a3f4a" stroke-width="1" stroke-linejoin="round"/>
  <path d="M36.500 592.500v3.500h3.500" fill="none" stroke="#3a3f4a" stroke-width=".800"/>
  <path d="M28 602.500v-5h6v5M30 602.500v-2.500h2M37 598.500v4" fill="none" stroke="#7d8390" stroke-width=".900"/>
  <!-- families -->
  <path d="M27 608.500h5.500v5.500h-5.500zM35 608.500h4.500v12h-13v-4h8.500z" fill="#e6e8ee" stroke="#3a3f4a" stroke-width="1" stroke-linejoin="round"/>
  <!-- groups -->
  <path d="M29 624.500h-2.500v13h2.500M37 624.500h2.500v13h-2.500" fill="none" stroke="#2c3140" stroke-width="1.100"/>
  <rect x="31" y="629.500" width="6" height="6" fill="#e4e6ec" stroke="#4a5060" stroke-width=".900"/>
  <circle cx="31.800" cy="630" r="3.600" fill="#d4d8e2" fill-opacity=".85" stroke="#4a5060" stroke-width=".900"/>
  <!-- revit links -->
  <g fill="none" stroke="#b87c06" stroke-width="2.400">
    <rect x="26" y="644.700" width="8" height="4.800" rx="2.400"/>
    <rect x="32.200" y="644.700" width="8" height="4.800" rx="2.400"/>
  </g>
  <g fill="none" stroke="#f6c437" stroke-width="1.100">
    <rect x="26" y="644.700" width="8" height="4.800" rx="2.400"/>
    <rect x="32.200" y="644.700" width="8" height="4.800" rx="2.400"/>
  </g>
</svg>
<!-- pane edges -->
<div style="left:1px;top:172px;width:1px;height:603px;background:#fff"></div>
<div style="left:1px;top:773px;width:168px;height:2px;background:#fff"></div>
<!-- browser h-scrollbar -->
<div class="strack" style="left:5px;top:757px;width:161px;height:16px"></div>
<div class="sbtn" style="left:5px;top:757px;width:16px;height:16px"></div>
<div class="sbtn" style="left:21px;top:757px;width:101px;height:16px"></div>
<div class="sbtn" style="left:151px;top:757px;width:15px;height:16px"></div>
<svg style="left:5px;top:757px" width="161" height="16" viewBox="0 0 161 16"><path d="M9 4v8l-4-4zM152.500 4v8l4-4z" fill="#000"/></svg>
<!-- splitter -->
<div style="left:169px;top:172px;width:2px;height:604px;background:#404040;border-left:1px solid #707070"></div>
<div style="left:171px;top:172px;width:3px;height:604px;background:#d3e9e3;border-right:1px solid #fff"></div>
<div style="left:174px;top:172px;width:3px;height:604px;background:#d4d0c8"></div>
<!-- drawing area -->
<div id="cborderT"></div>
<div id="cborderL"></div>
<div style="left:1278px;top:172px;width:2px;height:604px;background:#fff"></div>
<div id="canvas">
<svg style="left:0;top:0" width="1083" height="585" viewBox="179 172 1083 585">
  <g stroke="#c9c9c9" stroke-width="1" shape-rendering="crispEdges">
    <path d="M179 221.500H221M274 221.500H327M379 221.500H590M643 221.500H696M749 221.500H960M1013 221.500H1066M1119 221.500H1262"/>
    <path d="M179 318.500H208M261 318.500H472M525 318.500H578M631 318.500H842M895 318.500H948M1001 318.500H1148"/>
  </g>
  <circle cx="1253.500" cy="318.500" r="105" fill="none" stroke="#cfcfcf" stroke-width="1"/>
  <text x="1252.300" y="353" text-anchor="middle" font-family="Liberation Sans, sans-serif" font-size="110" fill="#c6c6c6">2</text>
  <path d="M649.500 318.500H782.500L828.500 364.500V365.500L875.500 412.500V545.500L782.500 638.500H649.500L603.500 592.500H602.500L555.500 545.500V412.500Z" fill="none" stroke="#e100ff" stroke-width="1" shape-rendering="crispEdges"/>
  <path d="M794 478.500H958.500" fill="none" stroke="#3d80f5" stroke-width="1" stroke-dasharray="11 9.330" stroke-dashoffset="5.100" shape-rendering="crispEdges"/>
  <path d="M875.500 474l4.300 4.500-4.300 4.500-4.300-4.500z" fill="#ff55ff"/>
  <!-- MDI child buttons -->
  <g fill="#fff" stroke="#34343c" stroke-width="1.350">
    <rect x="1211.500" y="181.500" width="11" height="3"/>
    <path d="M1232.500 178.500v-2.500h7v8h-2.500"/>
    <rect x="1229.500" y="178.500" width="7" height="7"/>
    <rect x="1232" y="181" width="2" height="2.500" stroke-width=".800"/>
    <path d="M1247.500 176.500h3l2 2.300 2-2.300h3l-3.400 4.300 3.400 4.300h-3l-2-2.300-2 2.300h-3l3.400-4.300z" stroke-linejoin="round"/>
  </g>
  <!-- navigation bar -->
  <rect x="1232.500" y="204.500" width="29" height="100" fill="#f0f0f0" fill-opacity=".55" stroke="#c4c4c4" stroke-width="1"/>
  <path d="M1253 208l4 4M1257 208l-4 4" stroke="#9a9a9a" stroke-width="1"/>
  <path d="M1236 230a10.500 10.500 0 0 1 10.500-10.500h8.500q2.500 0 2.500 2.500v8a10.750 10.750 0 0 1-21.500 0z" fill="#ededed" stroke="#a8a8a8" stroke-width="1.100"/>
  <circle cx="1243.500" cy="230.500" r="4.600" fill="#e6eef6" stroke="#8a8a8a" stroke-width="1.200"/>
  <path d="M1247 234l3.500 3.500" stroke="#8a8a8a" stroke-width="1.800"/>
  <path d="M1251.500 220.500v7M1248 224h7" stroke="#6e6e6e" stroke-width=".900"/>
  <path d="M1243.500 248.500h5l-2.500 2.800z" fill="#9a9a9a"/>
  <circle cx="1245" cy="269" r="5.600" fill="#f4f4f4" stroke="#8a8a8a" stroke-width="1.100"/>
  <rect x="1242" y="266" width="6" height="6" fill="#a9d18e" stroke="#6aa84f" stroke-width=".800"/>
  <path d="M1249.500 273.500l4.500 4.500" stroke="#7a7a7a" stroke-width="2"/>
  <path d="M1243.500 285.500h5l-2.500 2.800z" fill="#9a9a9a"/>
  <path d="M1251.500 294.500h5M1252 296.500h4l-2 2.500z" stroke="#9a9a9a" stroke-width=".800" fill="#9a9a9a"/>
</svg>
</div>
<!-- v scrollbar -->
<div class="strack" style="left:1262px;top:172px;width:16px;height:585px"></div>
<div class="sbtn" style="left:1262px;top:172px;width:16px;height:16px"></div>
<div class="sbtn" style="left:1262px;top:456px;width:16px;height:16px"></div>
<div class="sbtn" style="left:1262px;top:741px;width:16px;height:16px"></div>
<svg style="left:1262px;top:172px" width="16" height="585" viewBox="0 0 16 585"><path d="M4 9.500h7l-3.500-3.500zM4 575.500h7l-3.500 3.500z" fill="#000"/></svg>
<!-- view control bar + h scrollbar -->
<div id="vcbar"></div>
<div class="strack" style="left:403px;top:757px;width:859px;height:16px"></div>
<div class="sbtn" style="left:403px;top:757px;width:16px;height:16px"></div>
<div class="sbtn" style="left:824px;top:757px;width:16px;height:16px"></div>
<div class="sbtn" style="left:1246px;top:757px;width:16px;height:16px"></div>
<div style="left:1262px;top:757px;width:16px;height:16px;background:#d4d0c8"></div>
<svg style="left:403px;top:757px" width="859" height="16" viewBox="0 0 859 16"><path d="M9.500 4.500v7l-3.500-3.500zM849.500 4.500v7l3.500-3.500z" fill="#000"/></svg>
<span class="t" style="left:190px;top:759px;letter-spacing:0.242px">1/8" = 1'-0"</span>
<svg style="left:255px;top:757px" width="145" height="16" viewBox="255 757 145 16">
  <!-- detail level -->
  <rect x="259.500" y="759.700" width="14" height="10.800" rx="1" fill="#e4e4e6" stroke="#2a2a38" stroke-width="1"/>
  <path d="M260 760.200h13v2.300h-13z" fill="#5c5c62"/>
  <path d="M260 762.500h4.300v3.500H260zM268.700 762.500h4.300v3.500h-4.300zM264.300 766h4.400v4h-4.400z" fill="#9a9a9e"/>
  <path d="M264.300 762.500h4.400v3.500h-4.400z" fill="#c9c9cc"/>
  <!-- model graphics -->
  <path d="M280.500 763.300l3.600-3.300h10.400v7l-3.600 3.500h-10.400z" fill="#d9dbe0" stroke="#2a2a38" stroke-width="1" stroke-linejoin="round"/>
  <path d="M280.500 763.300h10.400v7.200" fill="#eceef1" stroke="#2a2a38" stroke-width="1"/>
  <path d="M290.900 763.300l3.600-3.300" fill="none" stroke="#2a2a38" stroke-width="1"/>
  <!-- shadows off -->
  <circle cx="306.300" cy="762.800" r="4" fill="#e4f0fb" stroke="#2a7ad8" stroke-width="1.300"/>
  <path d="M302 770h5.500" stroke="#2a3040" stroke-width="1.300"/>
  <path d="M308.700 764.500l6 6M314.700 764.500l-6 6" stroke="#e01818" stroke-width="1.700" stroke-dasharray="1.400 .500"/>
  <!-- crop off -->
  <path d="M324.300 771v-9.500h11.500" fill="none" stroke="#1f62c8" stroke-width="1.900"/>
  <path d="M324.300 771v-9.500h11.500" fill="none" stroke="#e8f0fa" stroke-width=".600"/>
  <path d="M320.300 767.500h2.200M331 759.300h2.400" stroke="#222" stroke-width="1"/>
  <path d="M326.800 766.300h2.200" stroke="#e01818" stroke-width="1"/>
  <path d="M329.300 764.500l6 6M335.300 764.500l-6 6" stroke="#e01818" stroke-width="1.700" stroke-dasharray="1.400 .500"/>
  <!-- crop show -->
  <path d="M345.300 771v-9.500h6" fill="none" stroke="#1f62c8" stroke-width="1.900"/>
  <path d="M345.300 771v-9.500h6" fill="none" stroke="#e8f0fa" stroke-width=".600"/>
  <path d="M341.300 767.500h2.200M352 759.300h2.400" stroke="#222" stroke-width="1"/>
  <path d="M347.800 766.300h2.400" stroke="#e01818" stroke-width="1"/>
  <circle cx="354.200" cy="764" r="2.900" fill="#e4f0fb" stroke="#2a7ad8" stroke-width="1.200"/>
  <path d="M353 767v3.500h2.400v-3.500" fill="#fff" stroke="#2a62b8" stroke-width=".900"/>
  <!-- glasses -->
  <path d="M362.300 762l1.600-1 3.200 3.600M376 768l1.600-3.600-3.400-4.800-2 .6" fill="none" stroke="#20242e" stroke-width="1.100"/>
  <path d="M365.300 764.800q1.800-1.400 4.200.3l.6 2.800q-2.400 1.800-4.300.4z" fill="#c4daf0" stroke="#20242e" stroke-width="1"/>
  <path d="M371.300 764.300q2.400-1.600 4.600-.3l.3 2.600q-2 1.800-4.400.7z" fill="#c4daf0" stroke="#20242e" stroke-width="1"/>
  <path d="M369.700 765.400l1.700-.6" stroke="#20242e" stroke-width="1"/>
  <!-- bulb (dim) -->
  <ellipse cx="391.300" cy="764.500" rx="2.700" ry="3.300" fill="#eeeeee" stroke="#a8a8a8" stroke-width=".900"/>
  <path d="M390.200 767.500v2.500h2.200v-2.500" fill="#eee" stroke="#a8a8a8" stroke-width=".900"/>
</svg>
<!-- status bar -->
<div style="left:0;top:774px;width:1280px;height:1px;background:#fff"></div>
<div class="spane" style="left:0;width:860px"></div>
<div class="spane" style="left:862px;width:116px"></div>
<div class="spane" style="left:980px;width:97px"></div>
<div class="spane" style="left:1079px;width:104px"></div>
<div class="spane" style="left:1185px;width:95px"></div>
<div style="left:0;top:798px;width:1280px;height:2px;background:#fff"></div>
<span class="t" style="left:1.500px;top:781px"><span class="i" style="letter-spacing:-0.028px">Click to select, TAB for alternates, </span><span class="i" style="letter-spacing:-0.368px">CTRL adds, </span><span class="i" style="letter-spacing:-0.186px">SHIFT unselects.</span></span>
<div style="left:1085px;top:781px;width:14px;height:14px;border:1px solid #1c2c4c;background:linear-gradient(135deg,#d8d8e0 0,#f4f4f8 60%,#fff 100%)"></div>
<span class="t" style="left:1101.500px;top:781px;letter-spacing:-0.284px">Press &amp; Drag</span>
<svg style="left:1186px;top:780px" width="30" height="16" viewBox="1186 780 30 16">
  <path d="M1187.500 781.500h15l-5.600 6.500v5.500h-3.800v-5.500z" fill="#f4f4f4" stroke="#4a5a7a" stroke-width="1" stroke-linejoin="round"/>
  <path d="M1188.500 782.800h13" stroke="#9aa4b8" stroke-width="1.400"/>
</svg>
<span class="t" style="left:1204.500px;top:782px;letter-spacing:0.113px">:1</span>
</body>
</html>
